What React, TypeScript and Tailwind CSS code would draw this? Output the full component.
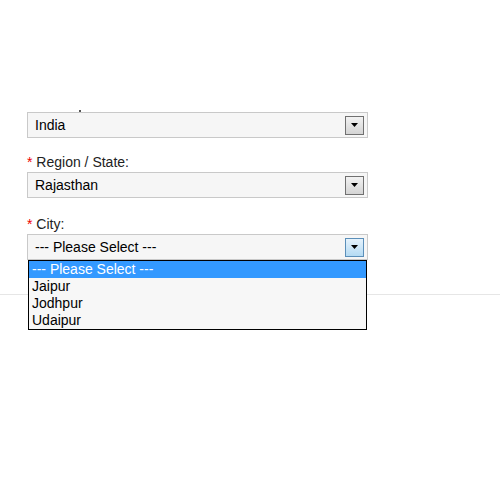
import React from "react";

function Arrow({ hover }: { hover?: boolean }) {
  return (
    <div
      className={
        "w-[19px] h-[19px] flex items-center justify-center border " +
        (hover
          ? "border-[#5b8fb9] bg-gradient-to-b from-[#e6f3fc] to-[#b4daf3]"
          : "border-[#707070] bg-gradient-to-b from-[#f2f2f2] to-[#d4d4d4]")
      }
    >
      <svg width="7" height="4" viewBox="0 0 7 4">
        <polygon points="0,0 7,0 3.5,4" fill="#000" />
      </svg>
    </div>
  );
}

function Select({ value, hover }: { value: string; hover?: boolean }) {
  return (
    <div className="h-[26px] w-[341px] border border-[#c9c9c9] bg-[#f6f6f6] flex items-center justify-between pl-[7px] pr-[3px] text-[14px] text-black">
      <span>{value}</span>
      <Arrow hover={hover} />
    </div>
  );
}

function Label({ text }: { text: string }) {
  return (
    <div className="h-[16px] text-[14px] leading-[16px] text-[#222] mb-[2px]">
      <span className="text-[#e00]">*</span> {text}
    </div>
  );
}

export default function App() {
  return (
    <div
      className="w-[500px] h-[500px] bg-white relative overflow-hidden"
      style={{ fontFamily: '"Liberation Sans", Arial, sans-serif' }}
    >
      <div className="pl-[27px] pt-[104px]">
        <div className="h-[8px] relative">
          <div className="absolute left-[52px] top-[6px] w-[2px] h-[2px] bg-[#555]" />
        </div>
        <Select value="India" />
        <div className="h-[16px]" />
        <Label text="Region / State:" />
        <Select value="Rajasthan" />
        <div className="h-[18px]" />
        <Label text="City:" />
        <div className="relative">
          <Select value="--- Please Select ---" hover />
          <div className="absolute left-[1px] top-[26px] w-[339px] border border-black bg-[#f7f7f7] z-10 text-[14px]">
            <div className="h-[17px] leading-[17px] px-[3px] bg-[#3399ff] text-white">--- Please Select ---</div>
            <div className="h-[17px] leading-[17px] px-[3px] text-black">Jaipur</div>
            <div className="h-[17px] leading-[17px] px-[3px] text-black">Jodhpur</div>
            <div className="h-[17px] leading-[17px] px-[3px] text-black">Udaipur</div>
          </div>
        </div>
      </div>
      <div className="mt-[34px] h-px bg-[#e6e6e6]" />
    </div>
  );
}
